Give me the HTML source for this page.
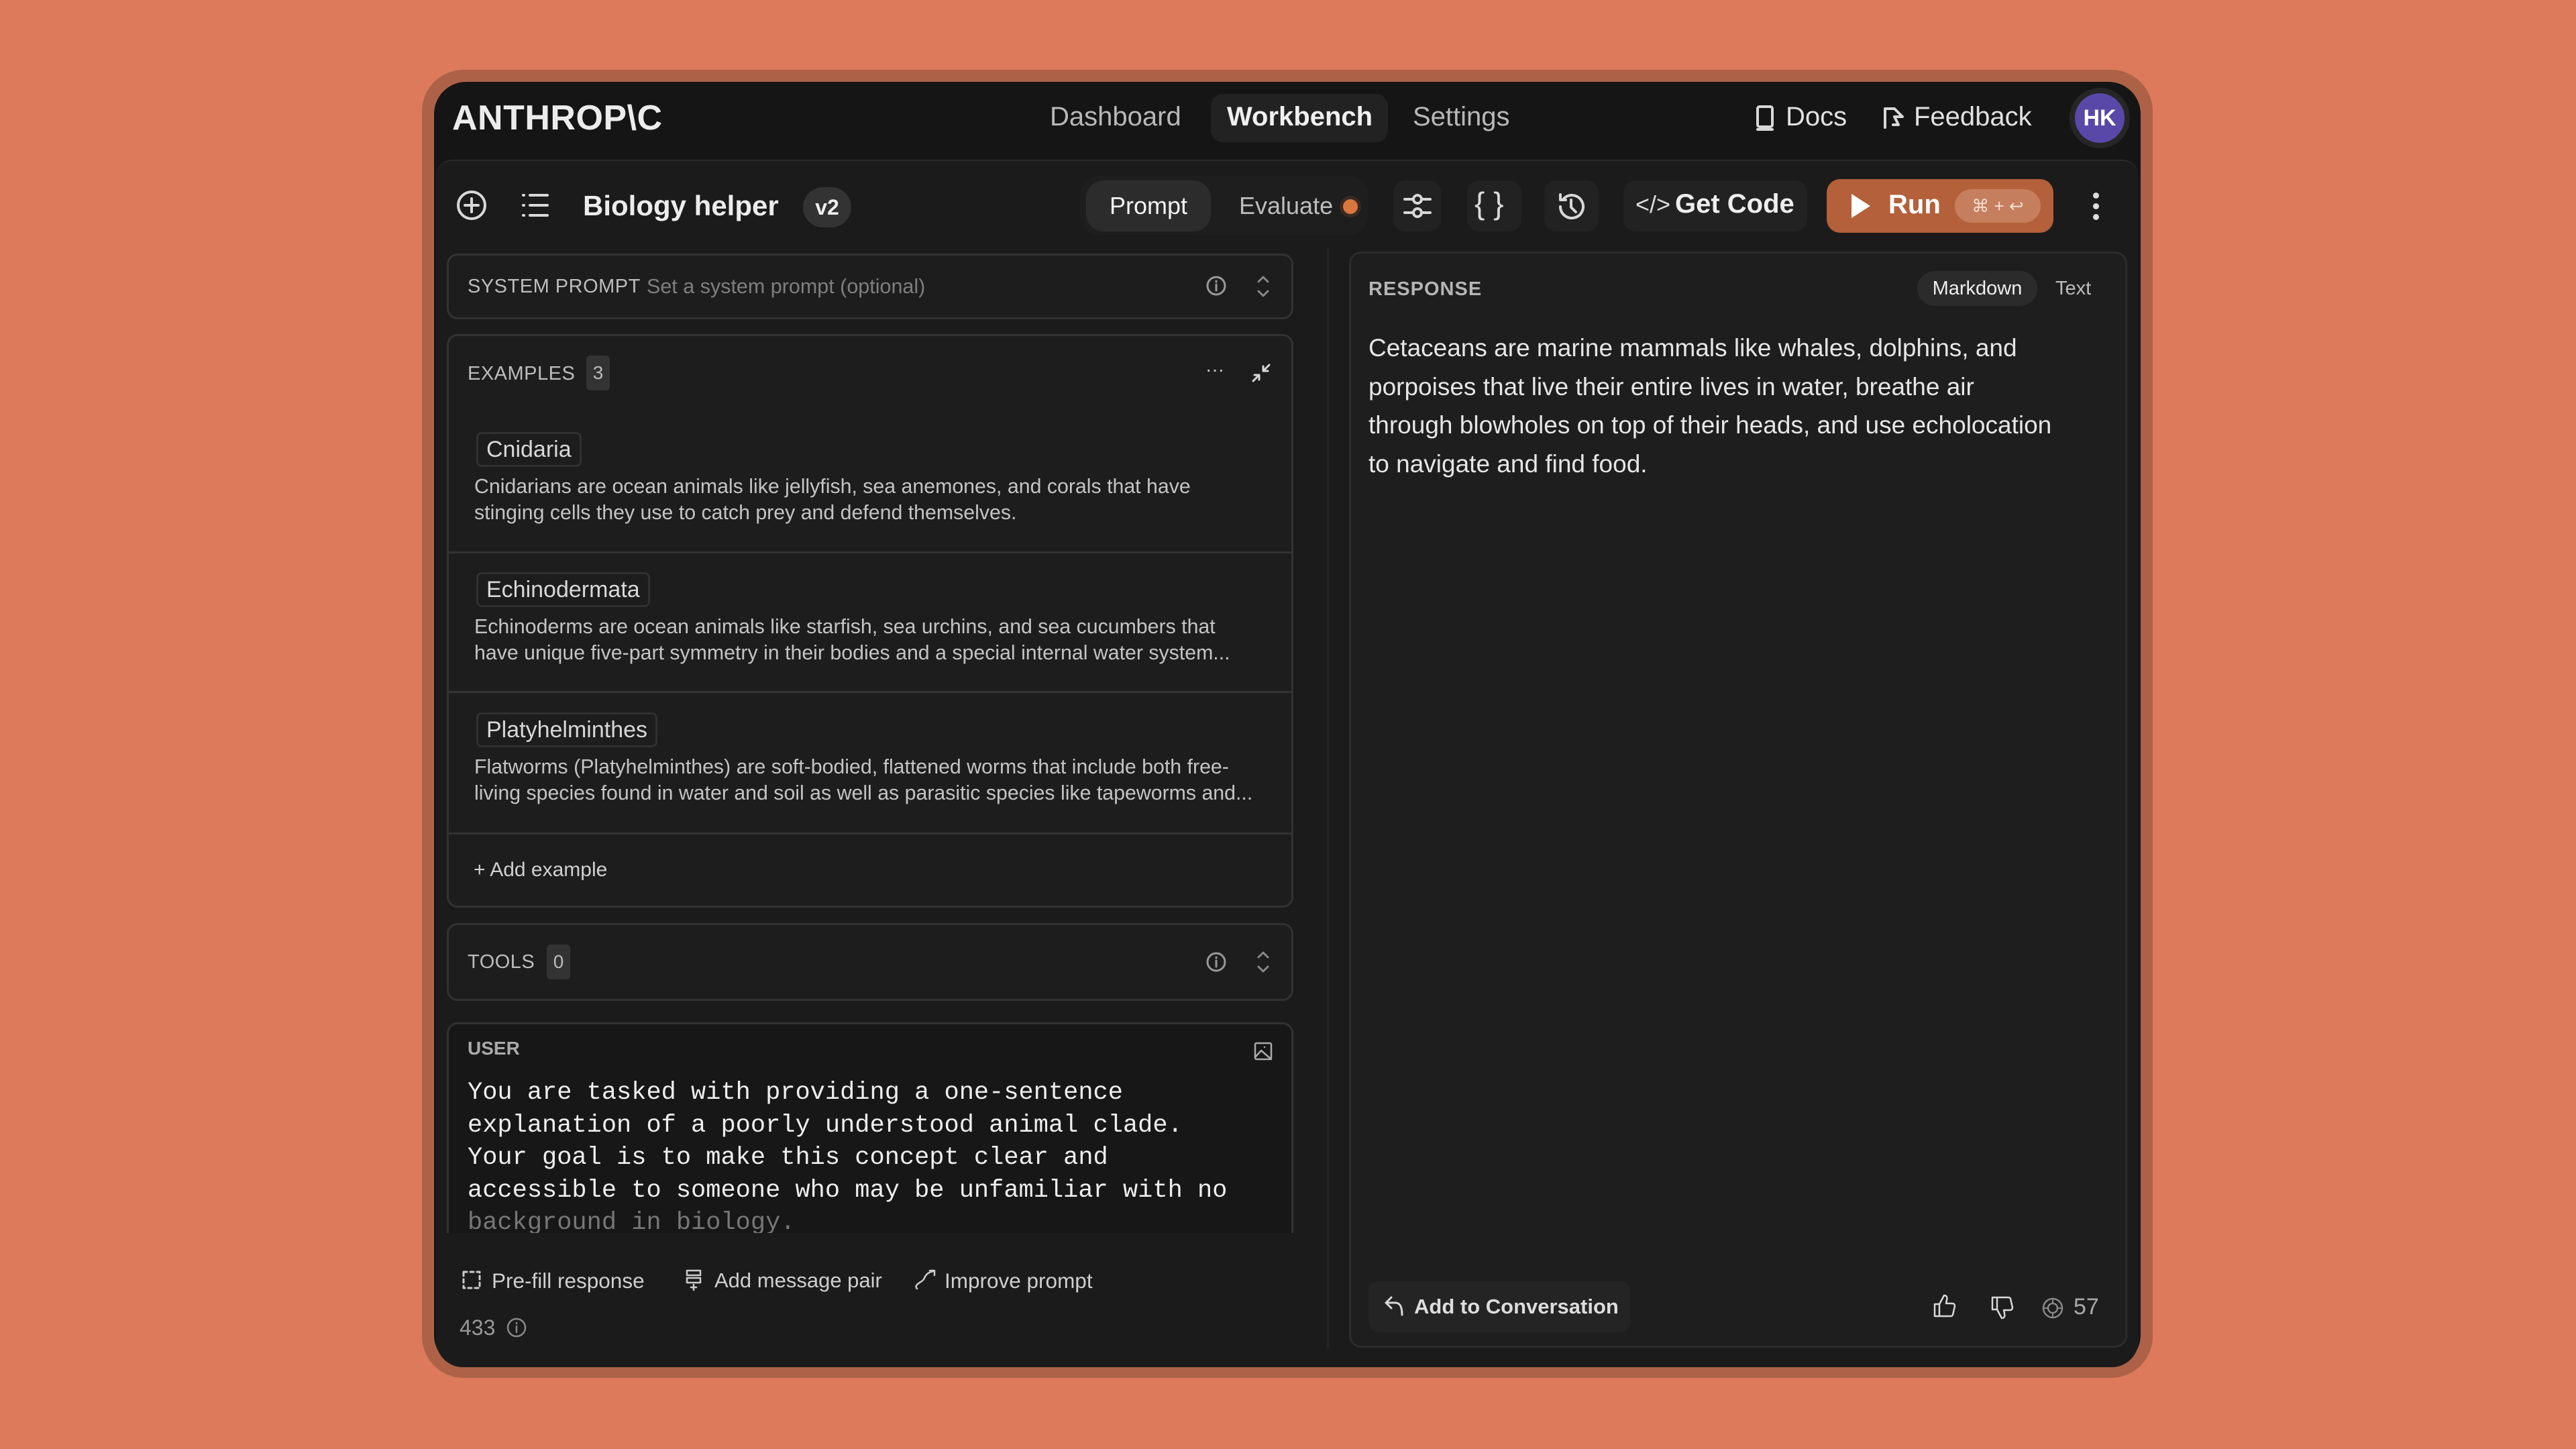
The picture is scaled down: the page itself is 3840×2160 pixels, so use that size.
<!DOCTYPE html>
<html><head><meta charset="utf-8"><style>
*{box-sizing:border-box;margin:0;padding:0}
body{width:3840px;height:2160px;background:#dc7a5b;font-family:"Liberation Sans",sans-serif;position:relative;overflow:hidden;color:#e8e8e8}
.a{position:absolute}
.frame{left:629px;top:104px;width:2580px;height:1950px;border-radius:62px;background:#ad6248}
.inner{left:647px;top:122px;width:2544px;height:1916px;border-radius:48px;background:#151515;overflow:hidden}
.body{left:650px;top:238px;width:2538px;height:1800px;background:#1b1b1b;border-radius:24px 24px 40px 40px;border-top:2px solid #2a2a2a}
.card{background:#1d1d1d;border:3px solid #323232;border-radius:16px}
.t{white-space:nowrap;position:absolute}
.btn{background:#222;border-radius:18px}
svg{position:absolute;fill:none;stroke:#d8d8d8;stroke-width:4;stroke-linecap:round;stroke-linejoin:round}
.lab{font-size:29px;color:#bdbdbd;letter-spacing:0.5px}
.desc{font-size:30.3px;color:#c4c4c4;line-height:39px}
.tag{border:3px solid #303030;border-radius:8px;font-size:34px;color:#d8d8d8;padding:0 12px;height:52px;line-height:46px}
.sep{height:3px;background:#333;left:666px;width:1262px}
</style></head><body>
<div class="a frame"></div>
<div class="a inner"></div>
<div class="a body"></div>

<!-- header -->
<div class="t" style="left:674px;top:146px;font-size:52px;font-weight:bold;color:#ececec;letter-spacing:0.5px">ANTHROP\C</div>
<div class="t" style="left:1565px;top:152px;font-size:40px;color:#b8b8b8">Dashboard</div>
<div class="a" style="left:1805px;top:140px;width:264px;height:72px;background:#222;border-radius:18px"></div>
<div class="t" style="left:1829px;top:152px;font-size:40px;color:#f0f0f0;font-weight:bold">Workbench</div>
<div class="t" style="left:2106px;top:152px;font-size:40px;color:#b8b8b8">Settings</div>
<svg style="left:2616px;top:156px" width="30" height="40" viewBox="0 0 30 40"><rect x="4" y="3" width="22" height="30" rx="3"/><path d="M4 37h22"/></svg>
<div class="t" style="left:2662px;top:152px;font-size:40px;color:#e0e0e0">Docs</div>
<svg style="left:2806px;top:158px" width="36" height="36" viewBox="0 0 36 36"><path d="M4 4v28M4 4h14l12 12-12 0 6 12-8 0 "/></svg>
<div class="t" style="left:2853px;top:152px;font-size:40px;color:#e0e0e0">Feedback</div>
<div class="a" style="left:3085px;top:131px;width:90px;height:90px;border-radius:50%;background:#262626"></div>
<div class="a" style="left:3093px;top:139px;width:74px;height:74px;border-radius:50%;background:#5a48a8;color:#fff;font-weight:bold;font-size:34px;text-align:center;line-height:74px">HK</div>

<!-- toolbar -->
<svg style="left:680px;top:283px" width="46" height="46" viewBox="0 0 46 46"><circle cx="23" cy="23" r="20"/><path d="M23 13v20M13 23h20"/></svg>
<svg style="left:776px;top:287px" width="44" height="38" viewBox="0 0 44 38"><path d="M4 4h1M4 19h1M4 34h1M14 4h26M14 19h26M14 34h26"/></svg>
<div class="t" style="left:869px;top:283px;font-size:42px;font-weight:bold;color:#ececec">Biology helper</div>
<div class="a" style="left:1197px;top:279px;width:72px;height:60px;border-radius:30px;background:#333;color:#eee;font-weight:bold;font-size:32px;text-align:center;line-height:60px">v2</div>
<div class="a" style="left:1610px;top:262px;width:430px;height:88px;border-radius:30px;background:#1e1e1e"></div>
<div class="a" style="left:1619px;top:269px;width:186px;height:76px;border-radius:26px;background:#2c2c2c;color:#f3f3f3;font-size:36px;text-align:center;line-height:76px">Prompt</div>
<div class="t" style="left:1847px;top:286px;font-size:36px;color:#bdbdbd">Evaluate</div>
<div class="a" style="left:2002px;top:297px;width:22px;height:22px;border-radius:50%;background:#d9773f;box-shadow:0 0 0 5px #3a2a22"></div>
<div class="a btn" style="left:2077px;top:269px;width:71px;height:76px"></div>
<svg style="left:2090px;top:284px" width="46" height="46" viewBox="0 0 46 46"><path d="M4 13h38M4 33h38"/><circle cx="23" cy="13" r="6" fill="#222"/><circle cx="23" cy="33" r="6" fill="#222"/></svg>
<div class="a btn" style="left:2187px;top:269px;width:81px;height:76px"></div>
<div class="t" style="left:2198px;top:276px;font-size:46px;color:#dcdcdc">{ }</div>
<div class="a btn" style="left:2302px;top:269px;width:81px;height:76px"></div>
<svg style="left:2318px;top:284px" width="48" height="48" viewBox="0 0 48 48"><path d="M8 24a17 17 0 1 0 5-12M8 6v8h8M24 14v11l7 7"/></svg>
<div class="a btn" style="left:2420px;top:269px;width:274px;height:76px"></div>
<div class="t" style="left:2438px;top:284px;font-size:36px;color:#dcdcdc">&lt;/&gt;</div>
<div class="t" style="left:2497px;top:282px;font-size:40px;font-weight:bold;color:#eee">Get Code</div>
<div class="a" style="left:2723px;top:267px;width:338px;height:80px;border-radius:20px;background:#b3603b"></div>
<div class="a" style="left:2760px;top:289px;width:0;height:0;border-left:28px solid #fff;border-top:18px solid transparent;border-bottom:18px solid transparent"></div>
<div class="t" style="left:2815px;top:283px;font-size:40px;font-weight:bold;color:#fff">Run</div>
<div class="a" style="left:2914px;top:282px;width:128px;height:50px;border-radius:25px;background:#c67f5e;color:#f4dcd0;font-size:26px;text-align:center;line-height:50px">⌘ + ↩</div>
<div class="a" style="left:3120px;top:287px;width:9px;height:9px;border-radius:50%;background:#ddd;box-shadow:0 16px 0 #ddd,0 32px 0 #ddd"></div>

<!-- left column -->
<div class="a card" style="left:666px;top:378px;width:1262px;height:98px"></div>
<div class="t lab" style="left:697px;top:411px">SYSTEM PROMPT</div>
<div class="t" style="left:964px;top:410px;font-size:30.5px;color:#7f7f7f">Set a system prompt (optional)</div>
<svg style="left:1797px;top:410px" width="32" height="32" viewBox="0 0 32 32"><circle cx="16" cy="16" r="13" stroke="#999" stroke-width="3"/><path d="M16 14v9M16 9v1" stroke="#999" stroke-width="3"/></svg>
<svg style="left:1872px;top:408px" width="22" height="38" viewBox="0 0 22 38"><path d="M4 12l7-7 7 7M4 26l7 7 7-7" stroke="#888" stroke-width="3"/></svg>

<div class="a card" style="left:666px;top:498px;width:1262px;height:855px"></div>
<div class="t lab" style="left:697px;top:541px">EXAMPLES</div>
<div class="a" style="left:874px;top:530px;width:35px;height:52px;border-radius:6px;background:#333;color:#bbb;font-size:28px;text-align:center;line-height:52px">3</div>
<div class="t" style="left:1797px;top:535px;font-size:28px;color:#ccc">···</div>
<svg style="left:1864px;top:540px" width="32" height="32" viewBox="0 0 32 32"><path d="M28 4l-9 9M19 6v7h7M4 28l9-9M6 19h7v7" stroke-width="3"/></svg>

<div class="t tag" style="left:710px;top:644px">Cnidaria</div>
<div class="t desc" style="left:707px;top:706px">Cnidarians are ocean animals like jellyfish, sea anemones, and corals that have<br>stinging cells they use to catch prey and defend themselves.</div>
<div class="a sep" style="top:822px"></div>
<div class="t tag" style="left:710px;top:853px">Echinodermata</div>
<div class="t desc" style="left:707px;top:915px">Echinoderms are ocean animals like starfish, sea urchins, and sea cucumbers that<br>have unique five-part symmetry in their bodies and a special internal water system...</div>
<div class="a sep" style="top:1030px"></div>
<div class="t tag" style="left:710px;top:1062px">Platyhelminthes</div>
<div class="t desc" style="left:707px;top:1124px">Flatworms (Platyhelminthes) are soft-bodied, flattened worms that include both free-<br>living species found in water and soil as well as parasitic species like tapeworms and...</div>
<div class="a sep" style="top:1241px"></div>
<div class="t" style="left:706px;top:1280px;font-size:30px;color:#d0d0d0">+ Add example</div>

<div class="a card" style="left:666px;top:1376px;width:1262px;height:116px"></div>
<div class="t lab" style="left:697px;top:1418px">TOOLS</div>
<div class="a" style="left:815px;top:1408px;width:35px;height:52px;border-radius:6px;background:#333;color:#bbb;font-size:28px;text-align:center;line-height:52px">0</div>
<svg style="left:1797px;top:1418px" width="32" height="32" viewBox="0 0 32 32"><circle cx="16" cy="16" r="13" stroke="#999" stroke-width="3"/><path d="M16 14v9M16 9v1" stroke="#999" stroke-width="3"/></svg>
<svg style="left:1872px;top:1415px" width="22" height="38" viewBox="0 0 22 38"><path d="M4 12l7-7 7 7M4 26l7 7 7-7" stroke="#888" stroke-width="3"/></svg>

<div class="a" style="left:666px;top:1524px;width:1262px;height:330px;border:3px solid #323232;border-bottom:none;border-radius:16px 16px 0 0;background:#171717"></div>
<div class="t" style="left:697px;top:1547px;font-size:28px;font-weight:bold;color:#aaa">USER</div>
<svg style="left:1868px;top:1552px" width="30" height="30" viewBox="0 0 30 30"><rect x="3" y="3" width="24" height="24" rx="2" stroke="#aaa" stroke-width="2.5"/><path d="M3 24l9-10 15 13M17 9h0" stroke="#aaa" stroke-width="2.5"/></svg>
<div class="t" style="left:697px;top:1605px;font-family:'Liberation Mono',monospace;font-size:37px;line-height:48.5px;color:#eee">You are tasked with providing a one-sentence<br>explanation of a poorly understood animal clade.<br>Your goal is to make this concept clear and<br>accessible to someone who may be unfamiliar with no<br><span style="color:#777">background in biology.</span></div>
<div class="a" style="left:660px;top:1838px;width:1275px;height:40px;background:#1b1b1b"></div>

<svg style="left:688px;top:1893px" width="30" height="30" viewBox="0 0 30 30"><rect x="3" y="3" width="24" height="24" stroke="#ccc" stroke-width="3" stroke-dasharray="5 5"/></svg>
<div class="t" style="left:733px;top:1891px;font-size:31.5px;color:#cfcfcf">Pre-fill response</div>
<svg style="left:1020px;top:1891px" width="28" height="34" viewBox="0 0 28 34"><rect x="4" y="3" width="20" height="7" stroke="#ccc" stroke-width="2.5"/><rect x="4" y="14" width="20" height="7" stroke="#ccc" stroke-width="2.5"/><path d="M14 24v8M10 28h8" stroke="#ccc" stroke-width="2.5"/></svg>
<div class="t" style="left:1065px;top:1891px;font-size:31px;color:#cfcfcf">Add message pair</div>
<svg style="left:1362px;top:1891px" width="36" height="34" viewBox="0 0 36 34"><path d="M5 30c-6-6 8-10 10-14s4-10 14-12M24 3h7v7" stroke="#ccc" stroke-width="2.5"/></svg>
<div class="t" style="left:1408px;top:1891px;font-size:31.5px;color:#cfcfcf">Improve prompt</div>
<div class="t" style="left:685px;top:1961px;font-size:32px;color:#999">433</div>
<svg style="left:754px;top:1963px" width="32" height="32" viewBox="0 0 32 32"><circle cx="16" cy="16" r="13" stroke="#888" stroke-width="2.5"/><path d="M16 14v9M16 9v1" stroke="#888" stroke-width="2.5"/></svg>

<div class="a" style="left:1978px;top:370px;width:3px;height:1640px;background:#242424"></div>

<!-- right column -->
<div class="a" style="left:2011px;top:375px;width:1160px;height:1634px;border:3px solid #2c2c2c;border-radius:18px;background:#1e1e1e"></div>
<div class="t" style="left:2040px;top:415px;font-size:29px;font-weight:bold;color:#b5b5b5;letter-spacing:1px">RESPONSE</div>
<div class="a" style="left:2858px;top:404px;width:179px;height:52px;border-radius:26px;background:#2b2b2b;color:#eee;font-size:29px;text-align:center;line-height:52px">Markdown</div>
<div class="t" style="left:3064px;top:414px;font-size:29px;color:#bbb">Text</div>
<div class="t" style="left:2040px;top:490px;font-size:37px;line-height:57.5px;color:#e6e6e6">Cetaceans are marine mammals like whales, dolphins, and<br>porpoises that live their entire lives in water, breathe air<br>through blowholes on top of their heads, and use echolocation<br>to navigate and find food.</div>

<div class="a" style="left:2040px;top:1910px;width:390px;height:76px;border-radius:14px;background:#242424"></div>
<svg style="left:2062px;top:1930px" width="32" height="34" viewBox="0 0 32 34"><path d="M12 4L4 12l8 8M4 12h14c8 0 10 8 10 18" stroke-width="3"/></svg>
<div class="t" style="left:2108px;top:1930px;font-size:31px;font-weight:bold;color:#ddd">Add to Conversation</div>
<svg style="left:2880px;top:1928px" width="36" height="38" viewBox="0 0 36 38"><path d="M4 16h7v18H4zM11 16l7-13c4 0 5 3 4 7l-1 5h9c3 0 4 2 4 4l-3 13c-1 2-2 2-4 2H11" stroke-width="2.5"/></svg>
<svg style="left:2966px;top:1930px" width="36" height="38" viewBox="0 0 36 38"><path d="M4 4h7v18H4zM11 22l7 13c4 0 5-3 4-7l-1-5h9c3 0 4-2 4-4L31 6c-1-2-2-2-4-2H11" stroke-width="2.5"/></svg>
<svg style="left:3043px;top:1933px" width="34" height="34" viewBox="0 0 34 34"><circle cx="17" cy="17" r="14" stroke="#888" stroke-width="2.5"/><circle cx="17" cy="17" r="7" stroke="#888" stroke-width="2.5"/><path d="M17 3v7M17 24v7M3 17h7M24 17h7" stroke="#888" stroke-width="2"/></svg>
<div class="t" style="left:3091px;top:1929px;font-size:34px;color:#aaa">57</div>
</body></html>
